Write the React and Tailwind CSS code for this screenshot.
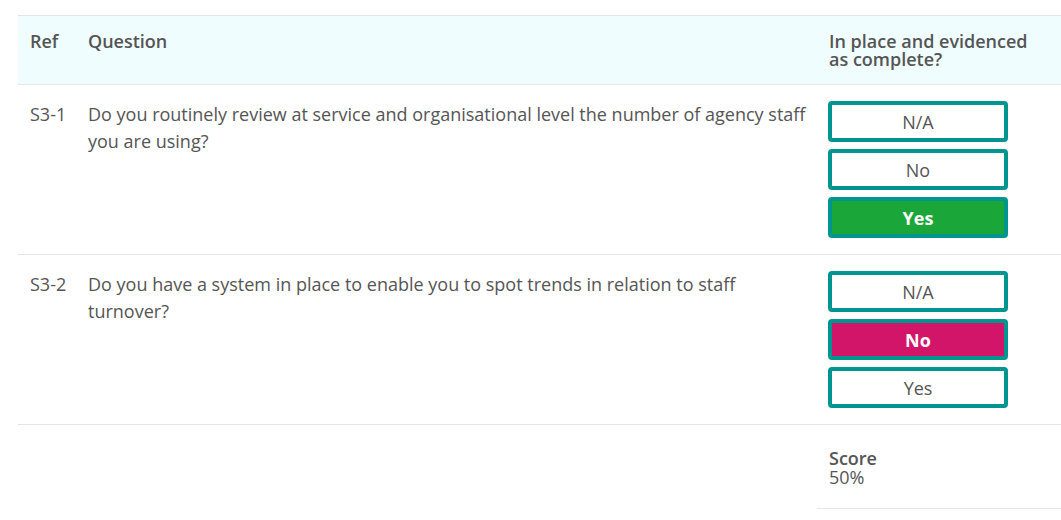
import React, { useState } from 'react';

const questions = [
  {
    ref: 'S3-1',
    text: 'Do you routinely review at service and organisational level the number of agency staff you are using?',
    answer: 'Yes',
  },
  {
    ref: 'S3-2',
    text: 'Do you have a system in place to enable you to spot trends in relation to staff turnover?',
    answer: 'No',
  },
];

const AnswerButton = ({ label, selected, onClick }) => {
  let cls = 'bg-white text-[#555] font-normal';
  if (selected && label === 'Yes') cls = 'bg-[#1ba63a] text-white font-bold';
  if (selected && label === 'No') cls = 'bg-[#d3156a] text-white font-bold';
  return (
    <button
      onClick={onClick}
      className={`h-[41px] w-[180px] rounded-[4px] border-4 border-[#00968f] text-[18px] leading-none ${cls}`}
    >
      {label}
    </button>
  );
};

const App = () => {
  const [answers, setAnswers] = useState(questions.map((q) => q.answer));

  return (
    <div className="min-h-screen bg-white pt-[15px] pl-[18px] text-[#555] font-['Open_Sans',sans-serif]">
      <div className="border-t border-[#e6e6e6]">
        <div className="flex bg-[#f0fdfe] border-b border-[#e6e6e6] py-4 text-[18px] leading-[18px] font-semibold">
          <div className="w-[58px] pl-3">Ref</div>
          <div className="w-[741px] pl-3">Question</div>
          <div className="pl-3 w-[220px]">In place and evidenced as complete?</div>
        </div>

        {questions.map((q, i) => (
          <div key={q.ref} className="flex border-b border-[#e6e6e6] pt-4 pb-4 text-[18px] leading-[27px]">
            <div className="w-[58px] pl-3">{q.ref}</div>
            <div className="w-[741px] pl-3 pr-2">{q.text}</div>
            <div className="pl-[11px] flex flex-col gap-[7px]">
              {['N/A', 'No', 'Yes'].map((opt) => (
                <AnswerButton
                  key={opt}
                  label={opt}
                  selected={answers[i] === opt}
                  onClick={() => setAnswers(answers.map((a, j) => (j === i ? opt : a)))}
                />
              ))}
            </div>
          </div>
        ))}

        <div className="flex">
          <div className="w-[799px]"></div>
          <div className="flex-1 border-b border-[#e6e6e6] pl-3 pt-6 pb-[21px] text-[18px] leading-[19px]">
            <div className="font-semibold">Score</div>
            <div>50%</div>
          </div>
        </div>
      </div>
    </div>
  );
};

export default App;
